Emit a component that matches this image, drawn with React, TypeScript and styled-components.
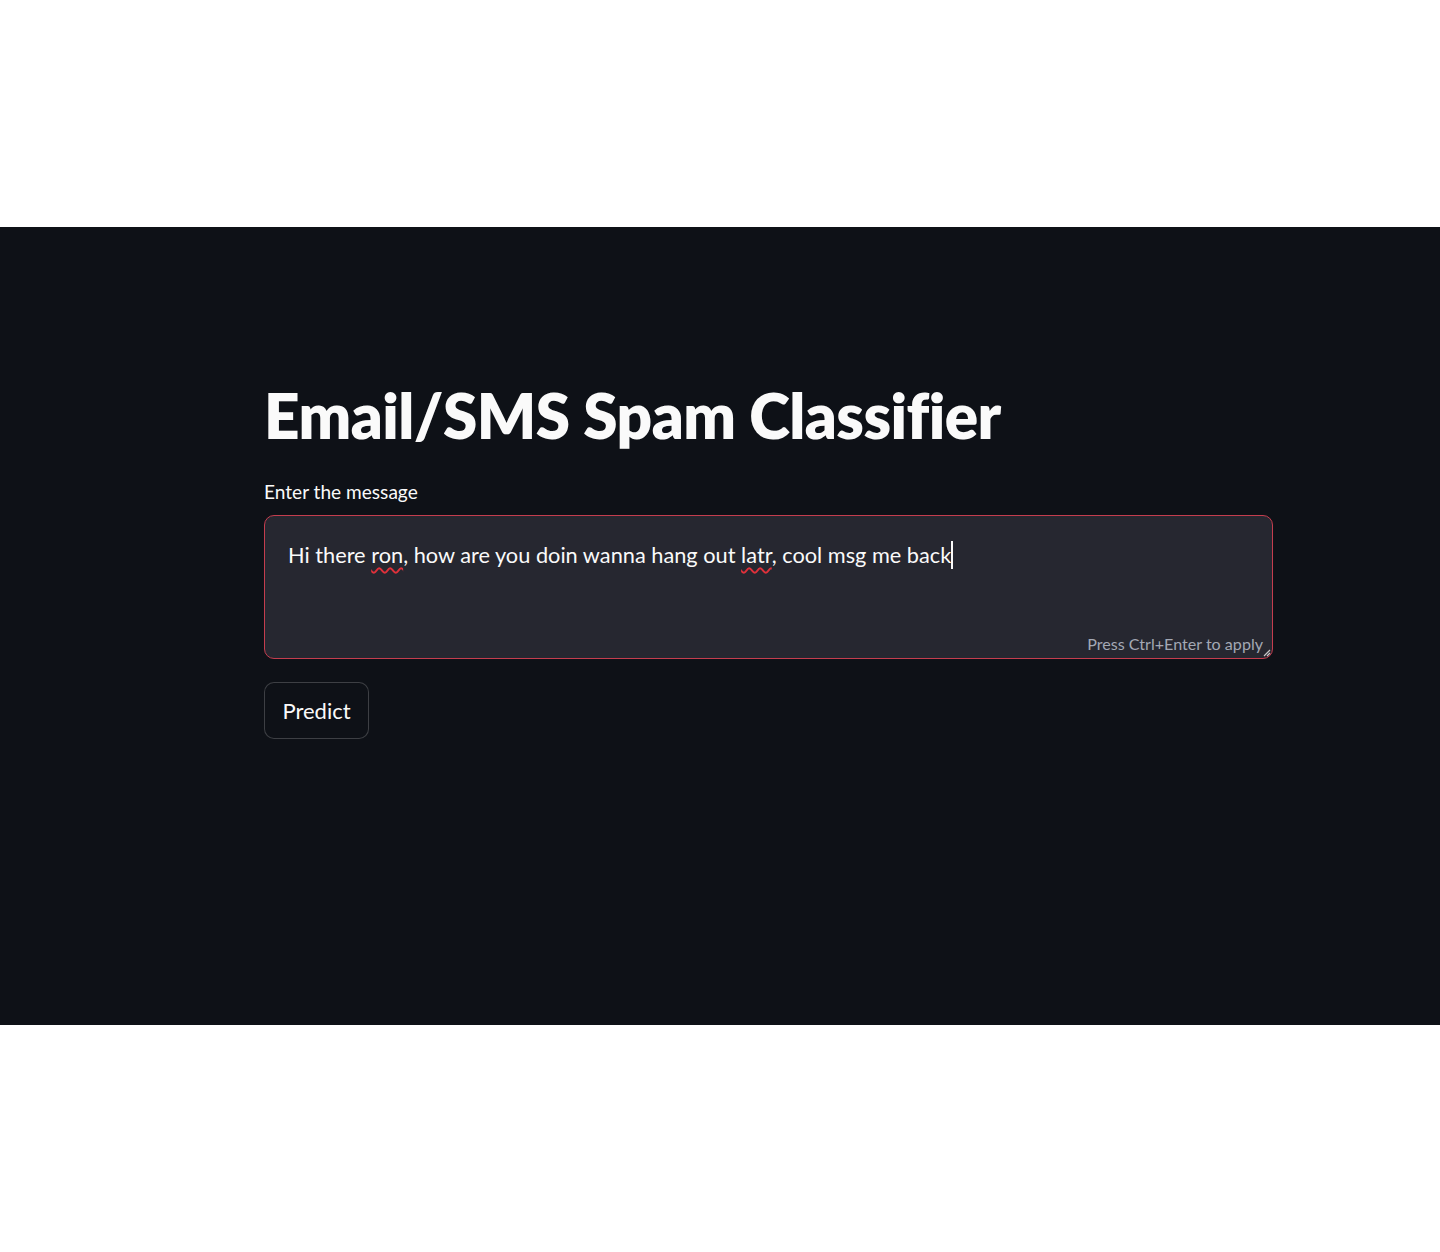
import React from 'react'
import styled, { createGlobalStyle } from 'styled-components'

const GlobalStyle = createGlobalStyle`
  html, body {
    margin: 0;
    padding: 0;
    background: #ffffff;
  }
  body {
    font-family: 'Lato', 'Noto Sans', sans-serif;
  }
`

const Page = styled.div`
  width: 1440px;
  height: 1252px;
  display: flex;
  flex-direction: column;
  justify-content: center;
  background: #ffffff;
`

const AppFrame = styled.main`
  height: 798px;
  background: #0e1117;
  display: flex;
  box-sizing: border-box;
  padding: 150px 0 0 264px;
`

const Block = styled.div`
  width: 1009px;
  display: flex;
  flex-direction: column;
`

const Title = styled.h1`
  margin: 0;
  font-family: 'Lato', 'Noto Sans', sans-serif;
  font-weight: 800;
  font-size: 62px;
  line-height: 76px;
  letter-spacing: -0.55px;
  color: #fafafa;
`

const Label = styled.label`
  margin-top: 24px;
  font-size: 19.1px;
  line-height: 30px;
  color: #fafafa;
`

const Field = styled.div`
  position: relative;
  margin-top: 8px;
  height: 144px;
  box-sizing: border-box;
  border: 1.5px solid #c43d4e;
  border-radius: 10px;
  background: #262730;
  padding: 22px 23px;
  font-size: 21.75px;
  line-height: 34px;
  color: #fafafa;
`

const Misspelled = styled.span`
  text-decoration: underline wavy #e0303a;
  text-decoration-thickness: 1.6px;
  text-underline-offset: 4px;
`

const Caret = styled.span`
  display: inline-block;
  width: 2px;
  height: 28px;
  background: #fafafa;
  vertical-align: -6px;
`

const Hint = styled.span`
  position: absolute;
  right: 9px;
  bottom: 2px;
  font-size: 16.1px;
  line-height: 24px;
  color: #a3a8b4;
`

const Grip = styled.svg`
  position: absolute;
  right: 1px;
  bottom: 1px;
`

const Button = styled.button`
  align-self: flex-start;
  margin-top: 23px;
  width: 105px;
  height: 57px;
  border: 1px solid rgba(250, 250, 250, 0.2);
  border-radius: 10px;
  background: #0e1117;
  color: #fafafa;
  font-family: 'Lato', 'Noto Sans', sans-serif;
  font-size: 22px;
  padding: 0;
`

export default function App() {
  return (
    <>
      <GlobalStyle />
      <Page>
        <AppFrame>
          <Block>
            <Title>Email/SMS Spam Classifier</Title>
            <Label>Enter the message</Label>
            <Field>
              Hi there <Misspelled>ron</Misspelled>, how are you doin wanna hang out <Misspelled>latr</Misspelled>, cool msg me back
              <Caret />
              <Hint>Press Ctrl+Enter to apply</Hint>
              <Grip width="10" height="10" viewBox="0 0 10 10">
                <path d="M9 3 L3 9 M9 6 L6 9" stroke="#c8c8c8" strokeWidth="1.2" />
              </Grip>
            </Field>
            <Button>Predict</Button>
          </Block>
        </AppFrame>
      </Page>
    </>
  )
}
